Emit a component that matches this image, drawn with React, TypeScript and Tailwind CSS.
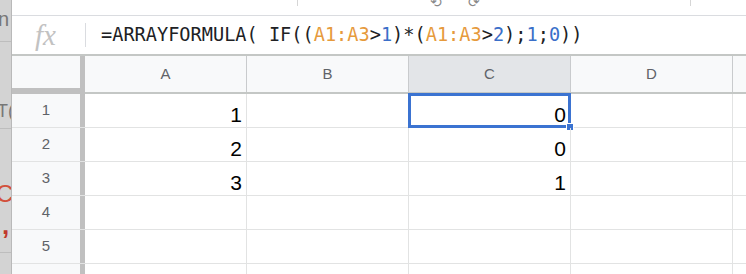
import React from "react";

const cols = ["A", "B", "C", "D", ""];
const colW = [162, 162, 162, 162, 20];
const rows: { n: number; a: string; c: string }[] = [
  { n: 1, a: "1", c: "0" },
  { n: 2, a: "2", c: "0" },
  { n: 3, a: "3", c: "1" },
  { n: 4, a: "", c: "" },
  { n: 5, a: "", c: "" },
  { n: 6, a: "", c: "" },
];

const O = ({ children }: { children: React.ReactNode }) => (
  <span className="text-[#e69a3c]">{children}</span>
);
const B = ({ children }: { children: React.ReactNode }) => (
  <span className="text-[#3a6fc9]">{children}</span>
);

export default function App() {
  return (
    <div className="w-[746px] h-[274px] overflow-hidden bg-white flex font-['Liberation_Sans',Arial,sans-serif]">
      {/* left background window strip */}
      <div className="w-[12px] shrink-0 bg-[#d3d3d3] relative overflow-hidden border-r border-[#b9b9b9]">
        <div className="absolute left-[-2px] top-[4px] text-[20px] text-[#777]">n</div>
        <div className="absolute left-0 top-[41px] w-full h-px bg-[#bdbdbd]" />
        <div className="absolute left-[-3px] top-[98px] text-[18px] text-[#777]">T(</div>
        <div className="absolute left-0 top-[128px] w-full h-px bg-[#bdbdbd]" />
        <div className="absolute left-[-4px] top-[176px] text-[24px] text-[#d2503c]">C</div>
        <div className="absolute left-[2px] top-[206px] text-[26px] font-bold text-[#c0392b]">,</div>
        <div className="absolute left-0 top-[252px] w-full h-px bg-[#bdbdbd]" />
      </div>

      <div className="flex-1 flex flex-col min-w-0">
        {/* toolbar remnant */}
        <div className="h-[16px] shrink-0 border-b border-[#dadce0] relative">
          <div className="absolute left-[285px] top-0 w-px h-[6px] bg-[#d6d6d6]" />
          <div className="absolute left-[418px] top-[-8px] text-[14px] text-[#888]">⟲</div>
          <div className="absolute left-[456px] top-[-8px] text-[14px] text-[#888]">⟳</div>
          <div className="absolute left-[678px] top-0 w-px h-[6px] bg-[#d6d6d6]" />
        </div>

        {/* formula bar */}
        <div className="h-[40px] shrink-0 flex items-center border-b-2 border-[#c4c7c5]">
          <div className="w-[73px] shrink-0 pl-[23px] font-['Liberation_Serif',serif] italic text-[29px] text-[#c2c2c2] leading-none">
            fx
          </div>
          <div className="w-px h-[24px] bg-[#dadce0]" />
          <div className="pl-[15px] font-['DejaVu_Sans_Mono',monospace] text-[18.6px] text-[#202124] whitespace-pre leading-none">
            =ARRAYFORMULA( IF((<O>A1:A3</O>&gt;<B>1</B>)*(<O>A1:A3</O>&gt;<B>2</B>);<B>1</B>;<B>0</B>))
          </div>
        </div>

        {/* column headers */}
        <div className="h-[38px] shrink-0 flex bg-[#f8f9fa] border-b-2 border-[#c4c7c5]">
          <div className="w-[73px] shrink-0 border-r-[5px] border-[#c0c0c0] bg-[#f8f9fa] -mb-[2px] border-b-[6px]" />
          {cols.map((c, i) => (
            <div
              key={i}
              style={{ width: colW[i] }}
              className={`shrink-0 flex items-center justify-center text-[15px] text-[#5f6368] border-r border-[#c9cbcd] ${
                c === "C" ? "bg-[#e3e5e8]" : ""
              }`}
            >
              {c}
            </div>
          ))}
        </div>

        {/* rows */}
        {rows.map((r) => (
          <div key={r.n} className="h-[34px] shrink-0 flex border-b border-[#e2e3e3]">
            <div className="w-[73px] shrink-0 flex items-center justify-center text-[15px] text-[#5f6368] bg-[#f8f9fa] border-r-[5px] border-[#c0c0c0]">
              {r.n}
            </div>
            {cols.map((c, i) => (
              <div
                key={i}
                style={{ width: colW[i] }}
                className="shrink-0 relative flex items-end justify-end pr-[4px] pb-[2px] text-[21px] text-black border-r border-[#e2e3e3] leading-none"
              >
                {c === "A" && <span>{r.a}</span>}
                {c === "C" && <span>{r.c}</span>}
                {c === "C" && r.n === 1 && (
                  <>
                    <div className="absolute -left-px -top-px -right-px -bottom-px border-[3px] border-[#3b73d1] pointer-events-none" />
                    <div className="absolute -right-[4px] -bottom-[4px] w-[8px] h-[8px] bg-[#3b73d1] border border-white" />
                  </>
                )}
              </div>
            ))}
          </div>
        ))}
      </div>
    </div>
  );
}
